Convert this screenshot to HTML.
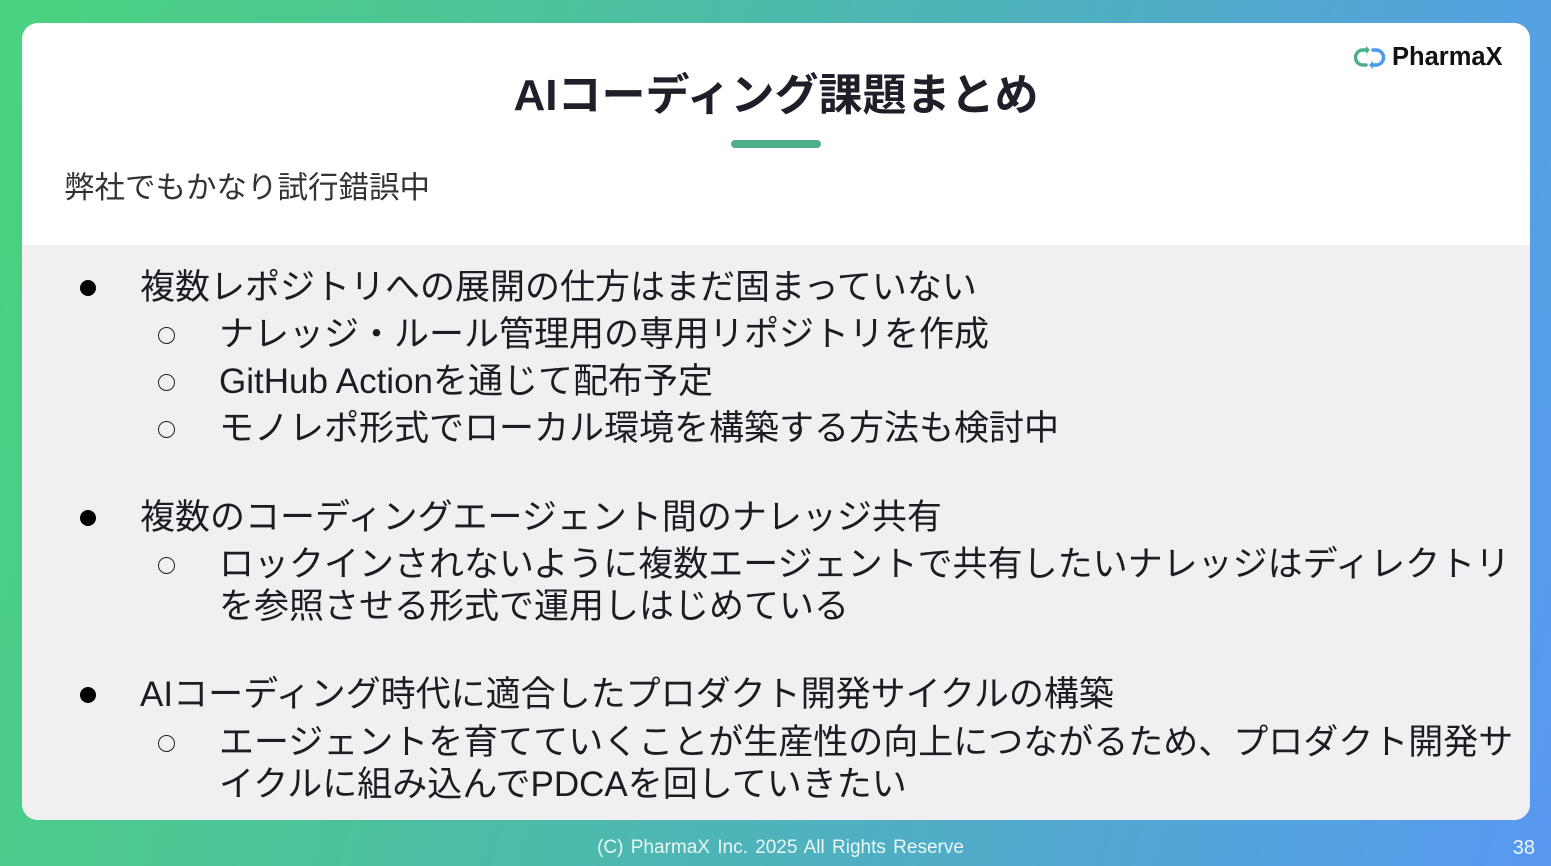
<!DOCTYPE html>
<html><head><meta charset="utf-8"><style>
*{margin:0;padding:0;box-sizing:border-box}
body{width:1551px;height:866px;overflow:hidden;position:relative;background:linear-gradient(105deg,#4bd27f 0%,#4cc39a 30%,#4fb0c0 60%,#5898f2 100%);font-family:"Liberation Sans","Noto Sans CJK JP",sans-serif;color:#1c1c22}
.card{position:absolute;left:22px;top:23px;width:1508px;height:797px;background:#fff;border-radius:16px;overflow:hidden}
.gray{position:absolute;left:0;top:222px;width:100%;height:575px;background:#f1eff2}
h1{position:absolute;left:0;width:100%;top:43px;text-align:center;font-size:44px;font-weight:bold;line-height:60px;color:#1f1f2a}
.bar{position:absolute;left:709px;top:117px;width:90px;height:8px;border-radius:4px;background:#4caf8a}
.sub{position:absolute;left:42px;top:145px;font-size:30.5px;line-height:40px;color:#333}
.l{position:absolute;font-size:35px;line-height:46px;white-space:nowrap}
.d{position:absolute;width:16px;height:16px;border-radius:50%;background:#000}
.c{position:absolute;width:17px;height:17px;border-radius:50%;border:1.6px solid #222}
.logo{position:absolute;left:1332px;top:20px;display:flex;align-items:center;gap:6px;font-size:25.5px;font-weight:bold;color:#111}
.foot{position:absolute;left:0;width:100%;top:837px;text-align:center;font-size:19px;color:rgba(255,255,255,.88);padding-left:10px;word-spacing:2px}
.pg{position:absolute;right:16px;top:837px;font-size:20px;color:rgba(255,255,255,.9)}
</style></head><body>
<div class="card">
<div class="gray"></div>
<h1>AIコーディング課題まとめ</h1>
<div class="bar"></div>
<div class="sub">弊社でもかなり試行錯誤中</div>
<div class="logo"><svg width="32" height="26" viewBox="0 0 32 26"><path d="M12 5 H9 A7.5 7.5 0 0 0 9 20 H12" fill="none" stroke="#4caf8a" stroke-width="3.5" stroke-linecap="round"/><path d="M12 1 L16 5 L12 9" fill="#4caf8a"/><path d="M19 20 H22 A7.5 7.5 0 0 0 22 5 H19" fill="none" stroke="#4a9ae8" stroke-width="3.5" stroke-linecap="round"/><path d="M19 16 L15 20 L19 24" fill="#4a9ae8"/></svg><span>PharmaX</span></div>
</div>
<div class="d" style="left:80px;top:280px"></div>
<div class="l" style="left:140px;top:265px">複数レポジトリへの展開の仕方はまだ固まっていない</div>
<div class="c" style="left:158px;top:327px"></div>
<div class="l" style="left:219px;top:312px">ナレッジ・ルール管理用の専用リポジトリを作成</div>
<div class="c" style="left:158px;top:374px"></div>
<div class="l" style="left:219px;top:359px">GitHub Actionを通じて配布予定</div>
<div class="c" style="left:158px;top:421px"></div>
<div class="l" style="left:219px;top:406px">モノレポ形式でローカル環境を構築する方法も検討中</div>
<div class="d" style="left:80px;top:510px"></div>
<div class="l" style="left:140px;top:495px">複数のコーディングエージェント間のナレッジ共有</div>
<div class="c" style="left:158px;top:557px"></div>
<div class="l" style="left:219px;top:542px">ロックインされないように複数エージェントで共有したいナレッジはディレクトリ</div>
<div class="l" style="left:219px;top:584px">を参照させる形式で運用しはじめている</div>
<div class="d" style="left:80px;top:687px"></div>
<div class="l" style="left:140px;top:672px">AIコーディング時代に適合したプロダクト開発サイクルの構築</div>
<div class="c" style="left:158px;top:735px"></div>
<div class="l" style="left:219px;top:720px">エージェントを育てていくことが生産性の向上につながるため、プロダクト開発サ</div>
<div class="l" style="left:219px;top:762px">イクルに組み込んでPDCAを回していきたい</div>
<div class="foot">(C)  PharmaX Inc. 2025  All Rights Reserve</div>
<div class="pg">38</div>
</body></html>
